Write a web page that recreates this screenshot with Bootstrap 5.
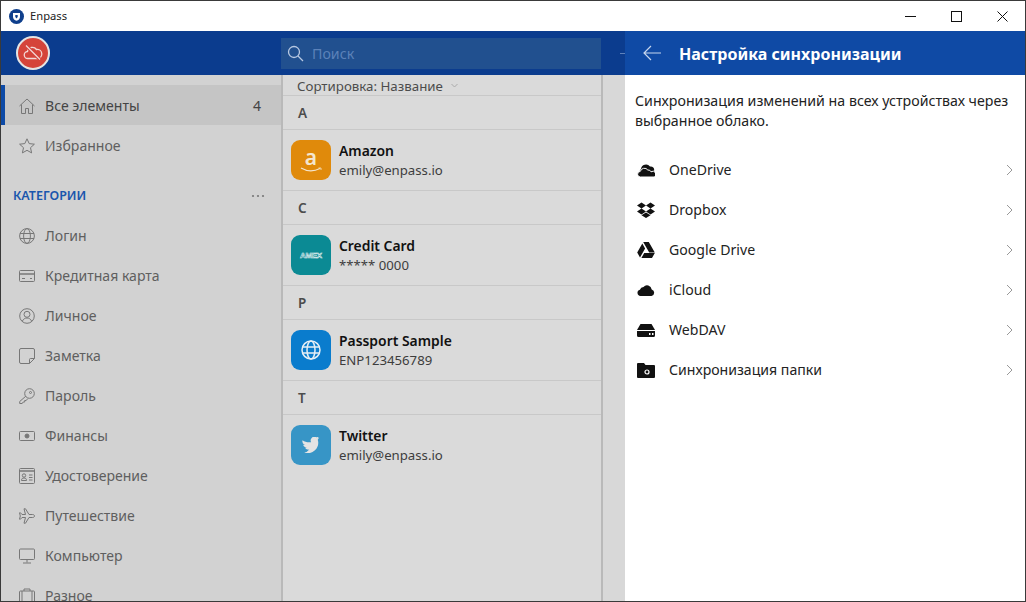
<!DOCTYPE html>
<html lang="ru">
<head>
    <meta charset="UTF-8">
    <title>Enpass</title>
    <link href="https://cdn.jsdelivr.net/npm/bootstrap@5.3.3/dist/css/bootstrap.min.css" rel="stylesheet">
    <style>
        html, body { height: 100%; overflow: hidden; }
        body { font-family: "Noto Sans", "Open Sans", sans-serif; font-size: 14px; background: #fff; color: #222; }
        .app-window { width: 1026px; height: 602px; border: 1px solid #3a3a3a; overflow: hidden; }
        .title-bar { height: 30px; background: #fff; font-size: 11.2px; }
        .app-logo { margin-left: 8px; margin-right: 6px; }
        .win-btn { width: 46px; height: 30px; }
        .left-area { width: 624px; }
        .top-dim { height: 44px; background: #0b3c8e; }
        .avatar { width: 34px; height: 34px; margin-left: 15px; border: 2px solid #e4e4e4; border-radius: 50%; background: #d5443a; }
        .search-box { width: 320px; height: 31px; margin-left: 231px; background: #21508f; padding-left: 6px; color: #5c82b9; font-size: 14.2px; }
        .search-word { padding-top: 2px; }
        .dash-mark { width: 5px; height: 1px; background: #5f82bb; margin-left: 19px; }
        .side-col { width: 280px; background: #d2d2d2; padding-top: 10px; color: #5f5f5f; font-size: 14.05px; }
        .side-row { height: 40px; padding-top: 2px; padding-left: 18px; padding-right: 20px; gap: 10px; }
        .side-active { background: #c5c5c5; border-left: 4px solid #0d4aa6; padding-left: 14px; color: #444; }
        .side-head { height: 50px; padding: 12px 16px 0 12px; color: #1a56ad; font-size: 12.5px; font-weight: 600; }
        .col-rule { width: 2px; background: #b9b9b9; flex: none; }
        .list-col { width: 318px; background: #dadada; }
        .sort-row { height: 21px; padding-left: 14px; padding-top: 1px; border-bottom: 1px solid #c8c8c8; color: #4c4c4c; font-size: 13.3px; line-height: 20px; }
        .letter-row { height: 34px; padding-left: 15px; padding-top: 2px; border-bottom: 1px solid #c8c8c8; font-weight: 600; color: #4c4c4c; font-size: 13.5px; }
        .entry-row { height: 61px; padding-left: 8px; gap: 8px; border-bottom: 1px solid #c8c8c8; }
        .entry-last { border-bottom-color: transparent; }
        .entry-icon { width: 40px; height: 40px; border-radius: 9px; flex: none; }
        .entry-name { font-size: 13.9px; font-weight: 600; color: #111; line-height: 19px; }
        .entry-sub { font-size: 13.2px; color: #3d3d3d; line-height: 19px; padding-top: 1px; }
        .gap-col { width: 22px; background: #d8d8d8; }
        .right-area { width: 400px; background: #fff; }
        .top-bright { height: 44px; background: #0f4aa5; color: #fff; padding-left: 18px; gap: 18px; font-size: 16px; font-weight: 700; }
        .top-title { padding-top: 2px; }
        .sync-text { padding: 16px 6px 0 10px; font-size: 14.2px; line-height: 20px; color: #222; height: 75px; }
        .sync-row { height: 40px; padding-left: 12px; padding-right: 12px; font-size: 14.1px; color: #222; }
        .sync-ico { width: 18px; margin-right: 14px; flex: none; }
        .sync-row .chev { margin-left: auto; }
        #ic-amazon { background: #e08a0b; }
        #ic-amex { background: #0b8a94; }
        #ic-globe { background: #0a7ccd; }
        #ic-twitter { background: #3795c6; }
    </style>
</head>
<body>
<div class="app-window d-flex flex-column">
    <!-- title bar -->
    <div class="title-bar d-flex align-items-center flex-shrink-0">
        <svg class="app-logo" width="15" height="15" viewBox="0 0 15 15"><circle cx="7.5" cy="7.5" r="7.5" fill="#0f3f8c"/><path d="M4 4h7v4c0 2-1.700 3.200-3.500 3.800C5.700 11.200 4 10 4 8z" fill="#fff"/><path d="M6.300 6h2.400v2l-1.200 1.500L6.300 8z" fill="#0f3f8c"/></svg>
        <span>Enpass</span>
        <div class="ms-auto d-flex">
            <div class="win-btn d-flex align-items-center justify-content-center"><svg width="11" height="11" viewBox="0 0 11 11"><path d="M0 5.500h11" stroke="#111"/></svg></div>
            <div class="win-btn d-flex align-items-center justify-content-center"><svg width="11" height="11" viewBox="0 0 11 11"><rect x=".5" y=".5" width="10" height="10" fill="none" stroke="#111"/></svg></div>
            <div class="win-btn d-flex align-items-center justify-content-center"><svg width="11" height="11" viewBox="0 0 11 11"><path d="M.5.5l10 10M10.500.5l-10 10" stroke="#111"/></svg></div>
        </div>
    </div>

    <div class="d-flex flex-grow-1 overflow-hidden">
        <!-- dimmed main app -->
        <div class="left-area d-flex flex-column">
            <div class="top-dim d-flex align-items-center flex-shrink-0">
                <div class="avatar d-flex align-items-center justify-content-center flex-shrink-0">
                    <svg width="20" height="18" viewBox="0 0 20 18" fill="none" stroke="#f3d9d6" stroke-width="1.300"><path d="M5 14.500a3.500 3.500 0 0 1-.5-7A5 5 0 0 1 13.500 5.500 4.500 4.500 0 0 1 15 14.500z"/><path d="M3 1.500l14 14" stroke="#d5443a" stroke-width="3.500"/><path d="M3 1.500l14 14"/></svg>
                </div>
                <div class="search-box d-flex align-items-center gap-2 flex-shrink-0">
                    <svg width="17" height="17" viewBox="0 0 17 17" fill="none" stroke="#b7c8e2" stroke-width="1.300"><circle cx="7" cy="7" r="5.500"/><path d="M11 11l5 5"/></svg>
                    <span class="search-word">Поиск</span>
                </div>
                <div class="dash-mark flex-shrink-0"></div>
            </div>
            <div class="d-flex flex-grow-1 overflow-hidden">
                <div class="side-col flex-shrink-0">
                    <div class="side-row side-active d-flex align-items-center">
                        <svg width="16" height="16" viewBox="0 0 16 16" fill="none" stroke="#777"><path d="M.5 8L8 1l7.500 7M2.500 6.500v9h4v-5h3v5h4v-9"/></svg>
                        <span>Все элементы</span><span class="ms-auto">4</span>
                    </div>
                    <div class="side-row d-flex align-items-center">
                        <svg width="16" height="16" viewBox="0 0 16 16" fill="none" stroke="#777"><path d="M8 .8l2.200 4.800 5.200.6-3.900 3.500 1.100 5.200L8 12.300 3.400 14.900l1.100-5.200L.6 6.200l5.200-.6z"/></svg>
                        <span>Избранное</span>
                    </div>
                    <div class="side-head d-flex align-items-center justify-content-between">
                        <span>КАТЕГОРИИ</span>
                        <svg width="14" height="4" viewBox="0 0 14 4" fill="#777"><circle cx="2" cy="2" r="1.100"/><circle cx="7" cy="2" r="1.100"/><circle cx="12" cy="2" r="1.100"/></svg>
                    </div>
                    <div class="side-row d-flex align-items-center">
                        <svg width="16" height="16" viewBox="0 0 16 16" fill="none" stroke="#777"><circle cx="8" cy="8" r="7.400"/><ellipse cx="8" cy="8" rx="3.400" ry="7.400"/><path d="M1 5.500h14M1 10.500h14"/></svg>
                        <span>Логин</span>
                    </div>
                    <div class="side-row d-flex align-items-center">
                        <svg width="16" height="16" viewBox="0 0 16 16" fill="none" stroke="#777"><rect x=".5" y="2.500" width="15" height="11" rx="1"/><path d="M.5 6h15" stroke-width="1.500"/><path d="M3 10.500h3M11 10.500h2"/></svg>
                        <span>Кредитная карта</span>
                    </div>
                    <div class="side-row d-flex align-items-center">
                        <svg width="16" height="16" viewBox="0 0 16 16" fill="none" stroke="#777"><circle cx="8" cy="8" r="7.300"/><circle cx="8" cy="6.300" r="3"/><path d="M3.300 13.200C4.300 11 6 10 8 10s3.700 1 4.700 3.200"/></svg>
                        <span>Личное</span>
                    </div>
                    <div class="side-row d-flex align-items-center">
                        <svg width="16" height="16" viewBox="0 0 16 16" fill="none" stroke="#777"><path d="M10.500 15.500H2a1.500 1.500 0 0 1-1.500-1.500V2A1.500 1.500 0 0 1 2 .5h12A1.500 1.500 0 0 1 15.500 2v8.500zM10.500 15.500V11.500a1 1 0 0 1 1-1h4"/></svg>
                        <span>Заметка</span>
                    </div>
                    <div class="side-row d-flex align-items-center">
                        <svg width="16" height="16" viewBox="0 0 16 16" fill="none" stroke="#777"><circle cx="10.500" cy="5.500" r="4.800"/><circle cx="11.500" cy="4.500" r="1"/><path d="M6.800 8.200L.7 13.500v2h2.500l1-1.500h1.500v-1.500h1.500l1.500-1.800"/></svg>
                        <span>Пароль</span>
                    </div>
                    <div class="side-row d-flex align-items-center">
                        <svg width="16" height="16" viewBox="0 0 16 16" fill="none" stroke="#777"><rect x=".5" y="3.500" width="15" height="9" rx="1"/><circle cx="8" cy="8" r="2" fill="#777"/></svg>
                        <span>Финансы</span>
                    </div>
                    <div class="side-row d-flex align-items-center">
                        <svg width="16" height="16" viewBox="0 0 16 16" fill="none" stroke="#777"><rect x=".5" y=".5" width="15" height="15" rx="1"/><path d="M.5 3h15" stroke-width="1.500"/><circle cx="5" cy="7.500" r="1.700"/><path d="M2.500 12.500c0-2 1-2.500 2.500-2.500s2.500.5 2.500 2.500zM10 7h3.500M10 9.500h3.500M10 12h3.500"/></svg>
                        <span>Удостоверение</span>
                    </div>
                    <div class="side-row d-flex align-items-center">
                        <svg width="16" height="16" viewBox="0 0 16 16" fill="none" stroke="#777"><path d="M15.500 8c0-1-1-1.500-2-1.500H10L6.500.8H5l1.500 5.700H3L1.500 4.800H.5L1.300 8 .5 11.200h1L3 9.500h3.500L5 15.200h1.500L10 9.500h3.500c1 0 2-.5 2-1.500z"/></svg>
                        <span>Путешествие</span>
                    </div>
                    <div class="side-row d-flex align-items-center">
                        <svg width="16" height="16" viewBox="0 0 16 16" fill="none" stroke="#777"><rect x=".5" y="1" width="15" height="10.500" rx="1"/><path d="M8 11.500v3M4 15h8" /></svg>
                        <span>Компьютер</span>
                    </div>
                    <div class="side-row d-flex align-items-center">
                        <svg width="16" height="16" viewBox="0 0 16 16" fill="none" stroke="#777"><rect x=".5" y="3" width="15" height="12" rx="1"/><path d="M5 3V1h6v2M3 3v12M13 3v12"/></svg>
                        <span>Разное</span>
                    </div>
                </div>
                <div class="col-rule"></div>
                <div class="list-col flex-shrink-0">
                    <div class="sort-row d-flex align-items-center gap-2">
                        <span>Сортировка: Название</span>
                        <svg width="7" height="5" viewBox="0 0 7 5" fill="none" stroke="#aaa"><path d="M.5 1l3 3 3-3"/></svg>
                    </div>
                    <div class="letter-row d-flex align-items-center">A</div>
                    <div class="entry-row d-flex align-items-center">
                        <div class="entry-icon d-flex align-items-center justify-content-center" id="ic-amazon">
                            <svg width="24" height="36" viewBox="0 -3 24 36"><text x="12" y="20" text-anchor="middle" font-family="Noto Sans, sans-serif" font-weight="600" font-size="21" fill="#f4e6cf">a</text><path d="M2 23c6 3.500 13 3.500 19 .5" fill="none" stroke="#f4e6cf" stroke-width="1.100"/><path d="M19.500 23h2.500v2" fill="none" stroke="#f4e6cf" stroke-width=".8"/></svg>
                        </div>
                        <div><div class="entry-name">Amazon</div><div class="entry-sub">emily@enpass.io</div></div>
                    </div>
                    <div class="letter-row d-flex align-items-center">C</div>
                    <div class="entry-row d-flex align-items-center">
                        <div class="entry-icon d-flex align-items-center justify-content-center" id="ic-amex">
                            <svg width="24" height="8" viewBox="0 0 24 8"><text x="12" y="7" text-anchor="middle" font-family="Liberation Sans, sans-serif" font-weight="700" font-size="8" textLength="22" fill="none" stroke="#e8f2f3" stroke-width=".5">AMEX</text></svg>
                        </div>
                        <div><div class="entry-name">Credit Card</div><div class="entry-sub">***** 0000</div></div>
                    </div>
                    <div class="letter-row d-flex align-items-center">P</div>
                    <div class="entry-row d-flex align-items-center">
                        <div class="entry-icon d-flex align-items-center justify-content-center" id="ic-globe">
                            <svg width="20" height="20" viewBox="0 0 20 20" fill="none" stroke="#e6eef5" stroke-width="1.500"><circle cx="10" cy="10" r="9"/><ellipse cx="10" cy="10" rx="4" ry="9"/><path d="M1.500 7h17M1.500 13h17"/></svg>
                        </div>
                        <div><div class="entry-name">Passport Sample</div><div class="entry-sub">ENP123456789</div></div>
                    </div>
                    <div class="letter-row d-flex align-items-center">T</div>
                    <div class="entry-row entry-last d-flex align-items-center">
                        <div class="entry-icon d-flex align-items-center justify-content-center" id="ic-twitter">
                            <svg width="19" height="16" viewBox="0 0 18 15" fill="#e4e4e4"><path transform="rotate(-14 9 7.500)" d="M18 2c-.6.300-1.300.5-2 .6.700-.4 1.300-1.100 1.500-1.900-.7.400-1.400.7-2.200.9A3.500 3.500 0 0 0 9.300 4.800C6.300 4.600 3.700 3.200 1.900 1a3.500 3.500 0 0 0 1.100 4.700c-.6 0-1.100-.2-1.600-.4 0 1.700 1.200 3.100 2.800 3.500-.5.100-1 .1-1.600 0 .5 1.400 1.800 2.400 3.300 2.400A7 7 0 0 1 .6 12.800 10 10 0 0 0 16 4c.8-.5 1.500-1.200 2-2z"/></svg>
                        </div>
                        <div><div class="entry-name">Twitter</div><div class="entry-sub">emily@enpass.io</div></div>
                    </div>
                </div>
                <div class="col-rule"></div>
                <div class="gap-col flex-grow-1"></div>
            </div>
        </div>

        <!-- sync settings panel -->
        <div class="right-area d-flex flex-column flex-shrink-0">
            <div class="top-bright d-flex align-items-center flex-shrink-0">
                <svg width="18" height="16" viewBox="0 0 18 16" fill="none" stroke="#c6d6ee" stroke-width="1.200"><path d="M18 8H1M8 1L1 8l7 7"/></svg>
                <span class="top-title">Настройка синхронизации</span>
            </div>
            <div class="sync-text">Синхронизация изменений на всех устройствах через выбранное облако.</div>
            <div class="sync-row d-flex align-items-center">
                <svg class="sync-ico" width="18" height="13" viewBox="0 0 18 13"><path d="M3 9.500A4 4 0 0 1 4 5 5 5 0 0 1 13 2.500 3.500 3.500 0 0 1 17 7l-4 3z" fill="#111"/><path d="M3.500 13a2.800 2.800 0 0 1-.2-5.600A4.200 4.200 0 0 1 10.800 6a3 3 0 0 1 3.200 1.800A2.700 2.700 0 0 1 17.500 13z" fill="#111" stroke="#fff" stroke-width="1"/></svg>
                <span>OneDrive</span>
                <svg class="chev" width="7" height="12" viewBox="0 0 7 12" fill="none" stroke="#999"><path d="M1 1l5 5-5 5"/></svg>
            </div>
            <div class="sync-row d-flex align-items-center">
                <svg class="sync-ico" width="18" height="16" viewBox="0 0 18 16" fill="#111"><path d="M4.500.5L0 3.500l4.500 3 4.500-3zM13.500.5L9 3.500l4.500 3 4.500-3zM0 9.500l4.500 3 4.500-3-4.500-3zM13.500 6.500L9 9.500l4.500 3 4.500-3zM4.500 13.300L9 16l4.500-2.700L9 10.500z"/></svg>
                <span>Dropbox</span>
                <svg class="chev" width="7" height="12" viewBox="0 0 7 12" fill="none" stroke="#999"><path d="M1 1l5 5-5 5"/></svg>
            </div>
            <div class="sync-row d-flex align-items-center">
                <svg class="sync-ico" width="18" height="16" viewBox="0 0 18 16" fill="#111"><path d="M6.200 0h5.600l6 10.500h-5.600zM5.300 1.500l2.800 5L3 15.500.2 10.500zM4.400 16l2.800-5h10.600L15 16z"/></svg>
                <span>Google Drive</span>
                <svg class="chev" width="7" height="12" viewBox="0 0 7 12" fill="none" stroke="#999"><path d="M1 1l5 5-5 5"/></svg>
            </div>
            <div class="sync-row d-flex align-items-center">
                <svg class="sync-ico" width="18" height="12" viewBox="0 0 18 12" fill="#111"><path d="M3.500 12a3.200 3.200 0 0 1-.6-6.300A4 4 0 0 1 6.500 3 4.700 4.700 0 0 1 14.700 5.400 3.400 3.400 0 0 1 14.500 12z"/></svg>
                <span>iCloud</span>
                <svg class="chev" width="7" height="12" viewBox="0 0 7 12" fill="none" stroke="#999"><path d="M1 1l5 5-5 5"/></svg>
            </div>
            <div class="sync-row d-flex align-items-center">
                <svg class="sync-ico" width="18" height="13" viewBox="0 0 18 13" fill="#111"><path d="M3.500 0h11L18 6H0z"/><path fill-rule="evenodd" d="M0 7h18v4.500a1.500 1.500 0 0 1-1.500 1.500h-15A1.500 1.500 0 0 1 0 11.500zM12 9v2h1.500V9zM15 9v2h1.500V9z"/></svg>
                <span>WebDAV</span>
                <svg class="chev" width="7" height="12" viewBox="0 0 7 12" fill="none" stroke="#999"><path d="M1 1l5 5-5 5"/></svg>
            </div>
            <div class="sync-row d-flex align-items-center">
                <svg class="sync-ico" width="18" height="15" viewBox="0 0 18 15"><path d="M0 1a1 1 0 0 1 1-1h6l1.500 2H17a1 1 0 0 1 1 1v11a1 1 0 0 1-1 1H1a1 1 0 0 1-1-1z" fill="#111"/><circle cx="10" cy="9" r="2" fill="none" stroke="#fff" stroke-width="1.200"/></svg>
                <span>Синхронизация папки</span>
                <svg class="chev" width="7" height="12" viewBox="0 0 7 12" fill="none" stroke="#999"><path d="M1 1l5 5-5 5"/></svg>
            </div>
        </div>
    </div>
</div>
<script src="https://cdn.jsdelivr.net/npm/bootstrap@5.3.3/dist/js/bootstrap.bundle.min.js"></script>
</body>
</html>
